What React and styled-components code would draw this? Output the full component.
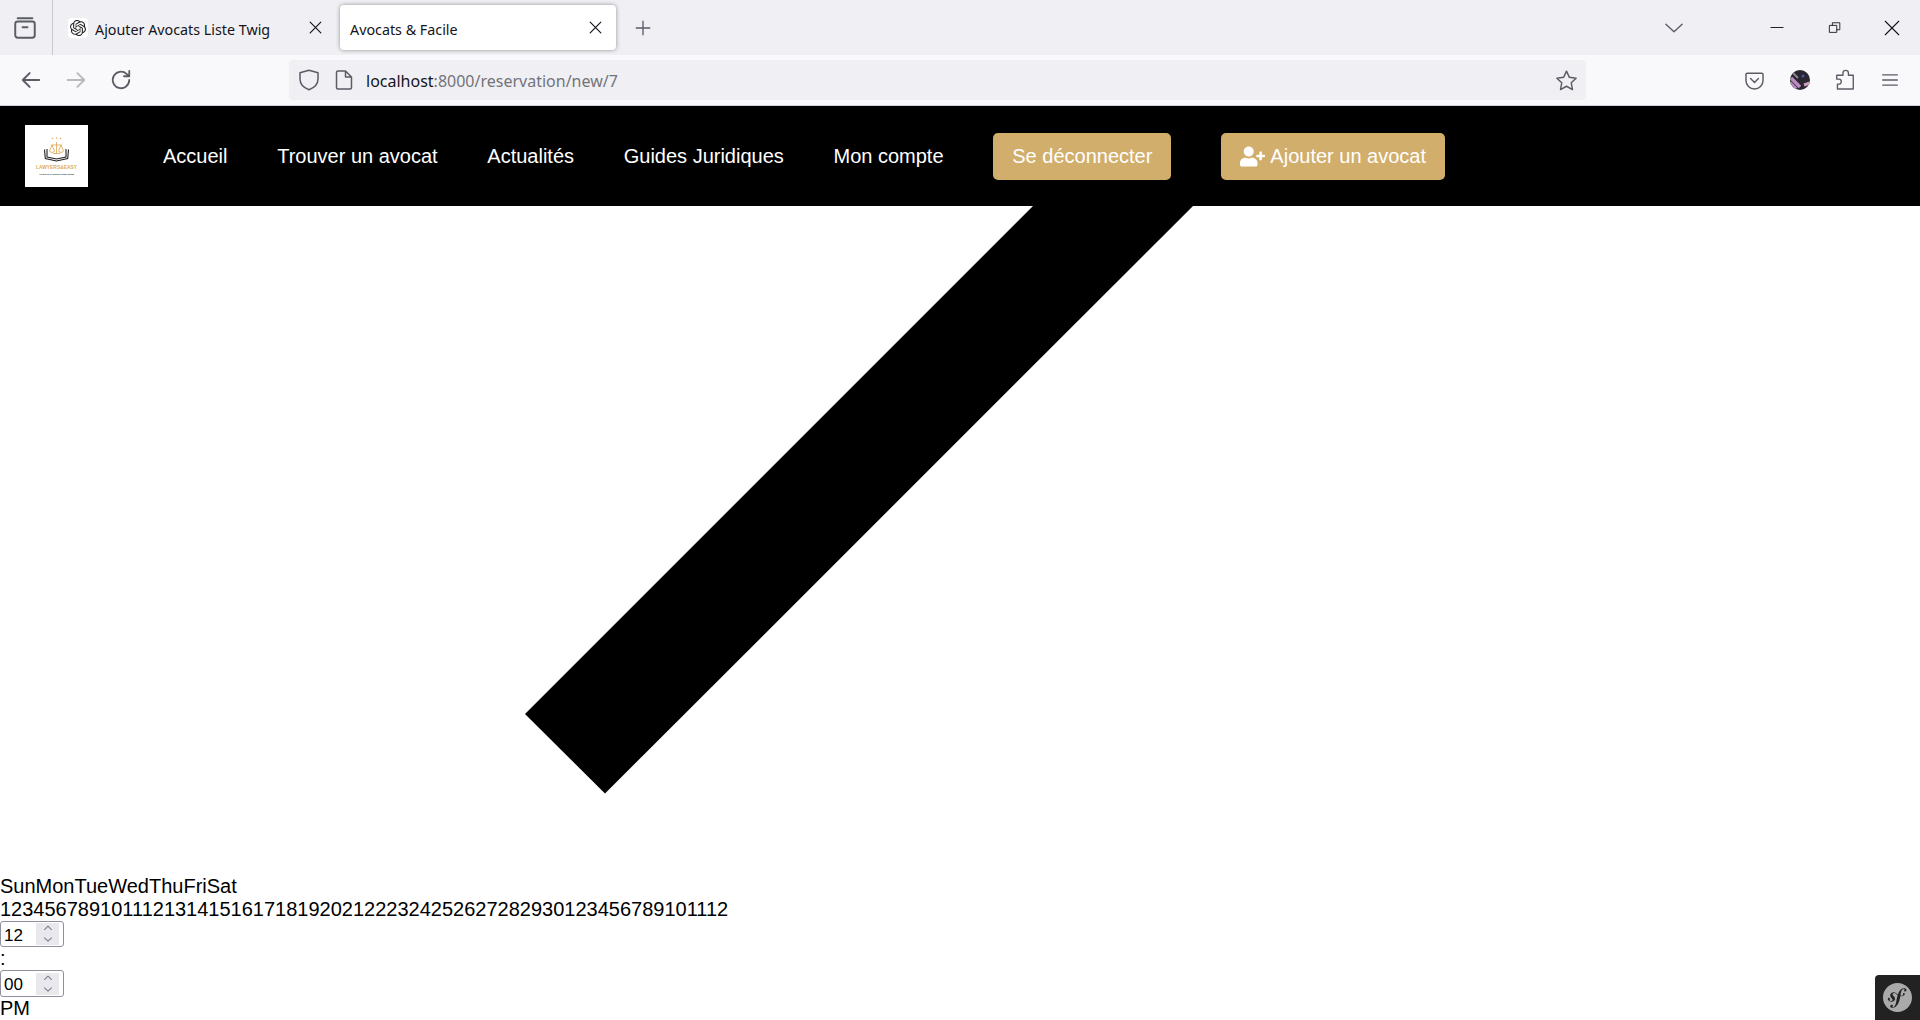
import React from 'react';
import styled, { createGlobalStyle } from 'styled-components';
import { SiOpenai, SiSymfony } from 'react-icons/si';
import { FaUserPlus } from 'react-icons/fa';

const GlobalStyle = createGlobalStyle`
  html, body {
    margin: 0;
    padding: 0;
    background: #fff;
    overflow: hidden;
    font-family: "Liberation Sans", Arial, sans-serif;
  }
`;

const Page = styled.div`
  position: relative;
  width: 1920px;
  height: 1020px;
  overflow: hidden;
  display: flex;
  flex-direction: column;
`;

/* browser chrome */
const TabStrip = styled.div`
  height: 55px;
  flex: none;
  background: #f0f0f4;
  display: flex;
  align-items: flex-start;
  font-family: "Noto Sans", sans-serif;
  font-size: 14.3px;
  color: #15141a;
`;

const ViewButton = styled.div`
  width: 53px;
  height: 55px;
  padding-right: 3px;
  box-sizing: border-box;
  flex: none;
  display: flex;
  align-items: center;
  justify-content: center;
  border-right: 1px solid #c9c9ce;
  color: #5b5b66;
`;

const Tab = styled.div`
  width: ${p => p.$width}px;
  height: 45px;
  margin: 5px 0 0 ${p => p.$left}px;
  padding: 0 12px 0 ${p => (p.$active ? 10 : 8)}px;
  box-sizing: border-box;
  flex: none;
  display: flex;
  align-items: center;
  border-radius: 4px;
  background: ${p => (p.$active ? '#fff' : 'transparent')};
  box-shadow: ${p => (p.$active ? '0 0 4px rgba(0, 0, 0, 0.4)' : 'none')};
`;

const TabIcon = styled.span`
  width: 20px;
  height: 20px;
  margin-right: 7px;
  display: flex;
  align-items: center;
  justify-content: center;
  background: #fff;
  border-radius: 4px;
  color: #222;
`;

const TabTitle = styled.span`
  flex: 1;
  padding-top: 3px;
  white-space: nowrap;
`;

const NewTab = styled.div`
  width: 20px;
  height: 56px;
  margin-left: 17px;
  display: flex;
  align-items: center;
  justify-content: center;
  color: #5b5b66;
`;

const WindowControls = styled.div`
  margin-left: auto;
  display: flex;
  align-items: center;
  height: 55px;
  color: #15141a;
`;

const ListTabs = styled.div`
  width: 20px;
  margin-right: 65px;
  display: flex;
  color: #5b5b66;
`;

const WinButton = styled.div`
  width: 57px;
  display: flex;
  justify-content: center;
`;

const Toolbar = styled.div`
  height: 50px;
  padding-left: 8px;
  flex: none;
  background: #f9f9fb;
  border-bottom: 1px solid #cfcfd8;
  display: flex;
  align-items: center;
  color: #5b5b66;
`;

const NavIcon = styled.div`
  width: 45px;
  flex: none;
  display: flex;
  justify-content: center;
  color: ${p => (p.$muted ? '#b9b9be' : '#5b5b66')};
`;

const UrlBar = styled.div`
  width: 1297px;
  height: 40px;
  margin-left: 146px;
  padding: 0 8px 0 8px;
  box-sizing: border-box;
  flex: none;
  display: flex;
  align-items: center;
  background: #f0f0f4;
  border-radius: 4px;
`;

const UrlIcon = styled.span`
  display: flex;
  margin-right: ${p => p.$gap}px;
`;

const UrlText = styled.span`
  flex: 1;
  padding-top: 2px;
  font-family: "Noto Sans", sans-serif;
  font-size: 16px;
  color: #737379;
`;

const UrlHost = styled.span`
  color: #15141a;
`;

const ToolIcons = styled.div`
  margin-left: 146px;
  display: flex;
  align-items: center;
`;

const ToolIcon = styled.div`
  width: 45px;
  display: flex;
  justify-content: center;
`;

/* site header */
const Header = styled.header`
  height: 100px;
  flex: none;
  position: relative;
  z-index: 1;
  background: #000;
  display: flex;
  align-items: center;
  padding-left: 25px;
`;

const Logo = styled.div`
  width: 63px;
  height: 62px;
  margin-right: 75px;
  flex: none;
  background: #fff;
  display: flex;
`;

const NavLink = styled.a`
  margin-right: 49.7px;
  color: #fff;
  font-size: 20px;
  white-space: nowrap;
`;

const GoldButton = styled.a`
  height: 47px;
  padding: 0 19px;
  margin-right: 50px;
  box-sizing: border-box;
  display: flex;
  align-items: center;
  gap: 5px;
  background: #d1ae6c;
  border-radius: 5px;
  color: #fff;
  font-size: 20px;
  white-space: nowrap;
`;

const Arrow = styled.svg`
  display: block;
  width: 1920px;
  height: 669px;
  flex: none;
`;

const Line = styled.div`
  height: 23px;
  font-size: 20px;
  line-height: 23px;
  color: #000;
  white-space: nowrap;
`;

const NumberField = styled.div`
  width: 64px;
  height: ${p => p.$height}px;
  box-sizing: border-box;
  flex: none;
  display: flex;
  align-items: center;
  border: 1px solid #8f8f9d;
  border-radius: 3px;
  background: #fff;
`;

const NumberInput = styled.input`
  width: 30px;
  border: 0;
  outline: 0;
  padding: 3px 0 0 3px;
  background: transparent;
  font-family: "Liberation Sans", Arial, sans-serif;
  font-size: 17px;
  color: #000;
`;

const Spinner = styled.div`
  width: 23px;
  height: 22px;
  margin-left: auto;
  margin-right: 4px;
  display: flex;
  flex-direction: column;
  align-items: center;
  justify-content: center;
  background: #e9e9ed;
  color: #7c7c85;
`;

const SymfonyBadge = styled.div`
  position: absolute;
  right: 0;
  bottom: 0;
  width: 45px;
  height: 45px;
  display: flex;
  align-items: center;
  justify-content: center;
  background: #222;
  border-top-left-radius: 4px;
  color: #aaa;
`;

function Stroke({ size = 16, children, width = 1.4 }) {
  return (
    <svg width={size} height={size} viewBox="0 0 16 16" fill="none" stroke="currentColor" strokeWidth={width} strokeLinecap="round" strokeLinejoin="round">
      {children}
    </svg>
  );
}

const CloseIcon = () => (
  <Stroke size={17} width={1.1}><path d="M3 3l10 10M13 3L3 13" /></Stroke>
);

function LogoMark() {
  return (
    <svg width="63" height="62" viewBox="0 0 63 62">
      <g fill="#dcae62">
        <circle cx="27.500" cy="13.500" r=".8" />
        <circle cx="31.500" cy="13" r=".8" />
        <circle cx="35.500" cy="13.500" r=".8" />
      </g>
      <path d="M31.500 17v11M26 20h11M25 25l2-5 2 5M34 25l2-5 2 5M24.500 25a2.500 2.500 0 0 0 5 0M33.500 25a2.500 2.500 0 0 0 5 0M28 28.500h7" fill="none" stroke="#dcae62" strokeWidth=".9" />
      <path d="M22 24v8l9.500 2 9.500-2v-8M19.500 24.500l.8 9 11.200 2.500 11.200-2.500.8-9" fill="none" stroke="#222" strokeWidth="1.100" />
      <text x="31.500" y="43.500" textAnchor="middle" textLength="41" lengthAdjust="spacingAndGlyphs" fontFamily="Liberation Sans" fontWeight="700" fontSize="5" fill="#dcae62">LAWYERS&amp;EASY</text>
      <text x="31.500" y="49.500" textAnchor="middle" textLength="35" lengthAdjust="spacingAndGlyphs" fontFamily="Liberation Sans" fontWeight="700" fontSize="2.500" fill="#111">AVOCAT FACILE POUR TOUS</text>
    </svg>
  );
}

function ProfilePicture() {
  return (
    <svg width="20" height="20" viewBox="0 0 20 20">
      <clipPath id="avatar-clip"><circle cx="10" cy="10" r="10" /></clipPath>
      <g clipPath="url(#avatar-clip)">
        <rect width="20" height="20" fill="#2a2630" />
        <path d="M1 8l9 9M0 13l6 6" stroke="#b98bc0" strokeWidth="3.500" fill="none" />
        <path d="M3 3l5 5" stroke="#8d8a90" strokeWidth="2" fill="none" />
        <circle cx="13" cy="6" r="1.500" fill="#3c5fa8" />
        <path d="M14 15l6-2" stroke="#c9a0b8" strokeWidth="3" fill="none" />
      </g>
    </svg>
  );
}

function HourField({ value, height }) {
  return (
    <NumberField $height={height}>
      <NumberInput type="text" value={value} readOnly />
      <Spinner>
        <Stroke size={14} width={1.5}><path d="M3 9.500l5-5 5 5" /></Stroke>
        <Stroke size={14} width={1.5}><path d="M3 5.500l5 5 5-5" /></Stroke>
      </Spinner>
    </NumberField>
  );
}

const links = ['Accueil', 'Trouver un avocat', 'Actualités', 'Guides Juridiques', 'Mon compte'];

export default function App() {
  return (
    <Page>
      <GlobalStyle />
      <TabStrip>
        <ViewButton>
          <Stroke size={26} width={1.200}>
            <path d="M3.500 2h9M2 5.500C2 4.700 2.700 4 3.500 4h9c.8 0 1.500.7 1.500 1.500v7c0 .8-.7 1.500-1.500 1.500h-9C2.700 14 2 13.300 2 12.500z" />
            <path d="M6.500 7.500h3" />
          </Stroke>
        </ViewButton>
        <Tab $width={276} $left={7}>
          <TabIcon><SiOpenai size={16} /></TabIcon>
          <TabTitle>Ajouter Avocats Liste Twig</TabTitle>
          <CloseIcon />
        </Tab>
        <Tab $active $width={276} $left={4}>
          <TabTitle>Avocats &amp; Facile</TabTitle>
          <CloseIcon />
        </Tab>
        <NewTab>
          <Stroke size={18} width={1.2}><path d="M8 2v12M2 8h12" /></Stroke>
        </NewTab>
        <WindowControls>
          <ListTabs>
            <Stroke size={20} width={1.1}><path d="M1.500 5l6.500 6 6.500-6" /></Stroke>
          </ListTabs>
          <WinButton><Stroke size={15} width={1}><path d="M1 8h13" /></Stroke></WinButton>
          <WinButton><Stroke size={14} width={1}><path d="M2 5h8v8H2zM5 5V2h8.500v8H10" /></Stroke></WinButton>
          <WinButton><Stroke size={18} width={1}><path d="M2 2l12 12M14 2L2 14" /></Stroke></WinButton>
        </WindowControls>
      </TabStrip>

      <Toolbar>
        <NavIcon><Stroke size={22}><path d="M14 8H2.500M7 3L2 8l5 5" /></Stroke></NavIcon>
        <NavIcon $muted><Stroke size={22}><path d="M2 8h11.500M9 3l5 5-5 5" /></Stroke></NavIcon>
        <NavIcon><Stroke size={24} width={1.200}><path d="M13.500 8a5.500 5.500 0 1 1-1.800-4.100L13.500 5.500M13.500 2v3.500H10" /></Stroke></NavIcon>
        <UrlBar>
          <UrlIcon $gap={11}>
            <Stroke size={24} width={1}><path d="M8 1.500l6 1.700v4c0 3.500-2.300 6-6 7.300-3.700-1.300-6-3.800-6-7.300v-4z" /></Stroke>
          </UrlIcon>
          <UrlIcon $gap={10}>
            <Stroke size={24} width={1}><path d="M3 3c0-.5.500-1 1-1h5l4 4v7c0 .5-.500 1-1 1H4c-.5 0-1-.5-1-1zM9 2v4h4" /></Stroke>
          </UrlIcon>
          <UrlText><UrlHost>localhost</UrlHost>:8000/reservation/new/7</UrlText>
          <Stroke size={23} width={1}><path d="M8 1.500l2 4.300 4.700.6-3.400 3.200.9 4.700L8 12l-4.200 2.300.9-4.700L1.300 6.400 6 5.800z" /></Stroke>
        </UrlBar>
        <ToolIcons>
          <ToolIcon>
            <Stroke size={21} width={1.100}><path d="M2.500 2.500h11c.6 0 1 .4 1 1V8a6.500 6.500 0 0 1-13 0V3.500c0-.6.400-1 1-1zM5 6.500l3 3 3-3" /></Stroke>
          </ToolIcon>
          <ToolIcon><ProfilePicture /></ToolIcon>
          <ToolIcon>
            <Stroke size={22} width={1}><path d="M6.500 4.500V3a2 2 0 0 1 4 0v1.500h3.500v10H2.500V11h1a1.800 1.800 0 0 0 0-3.600h-1.500V4.500z" /></Stroke>
          </ToolIcon>
          <ToolIcon>
            <Stroke size={18} width={1.2}><path d="M1.500 3.500h13M1.500 8h13M1.500 12.500h13" /></Stroke>
          </ToolIcon>
        </ToolIcons>
      </Toolbar>

      <Header>
        <Logo><LogoMark /></Logo>
        {links.map(link => (
          <NavLink key={link}>{link}</NavLink>
        ))}
        <GoldButton>Se déconnecter</GoldButton>
        <GoldButton><FaUserPlus size={25} />Ajouter un avocat</GoldButton>
      </Header>

      <Arrow viewBox="0 0 1920 669">
        <polygon points="1033,0 1193,0 605,587.500 525,508" fill="#000" />
      </Arrow>

      <Line>SunMonTueWedThuFriSat</Line>
      <Line>123456789101112131415161718192021222324252627282930123456789101112</Line>
      <HourField value="12" height={26} />
      <Line>:</Line>
      <HourField value="00" height={27} />
      <Line>PM</Line>

      <SymfonyBadge><SiSymfony size={29} /></SymfonyBadge>
    </Page>
  );
}
